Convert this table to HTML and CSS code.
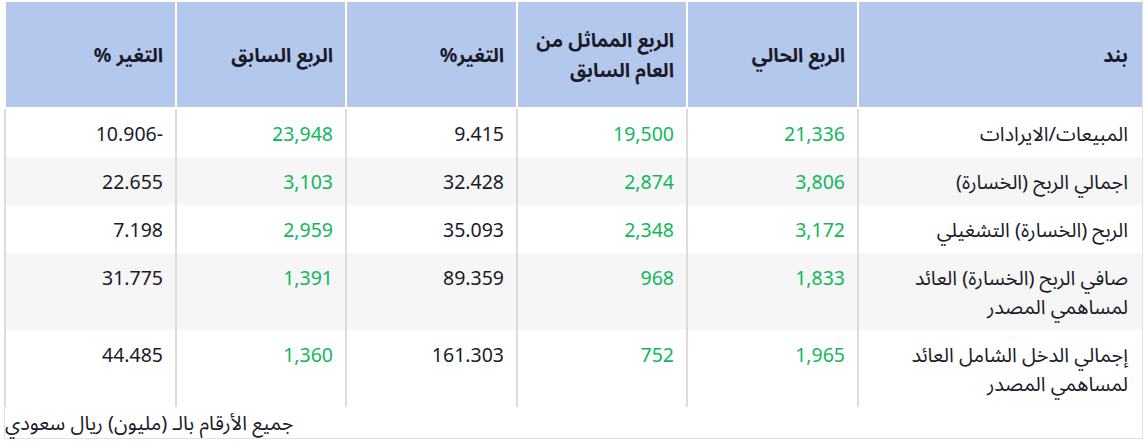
FILE: index.html
```html
<!DOCTYPE html>
<html lang="ar">
<head>
<meta charset="utf-8">
<title>نتائج الربع</title>
<link rel="stylesheet" href="styles.css">
</head>
<body>
<div class="panel" dir="rtl">
  <table class="fin">
    <colgroup>
      <col class="c-item">
      <col class="c-a">
      <col class="c-b">
      <col class="c-a">
      <col class="c-b">
      <col class="c-a">
    </colgroup>
    <thead>
      <tr>
        <th>بند</th>
        <th>الربع الحالي</th>
        <th>الربع المماثل من العام السابق</th>
        <th>التغير%</th>
        <th>الربع السابق</th>
        <th>التغير %</th>
      </tr>
    </thead>
    <tbody>
      <tr>
        <td>المبيعات/الايرادات</td>
        <td class="pos">21,336</td>
        <td class="pos">19,500</td>
        <td>9.415</td>
        <td class="pos">23,948</td>
        <td>-10.906</td>
      </tr>
      <tr class="alt">
        <td>اجمالي الربح (الخسارة)</td>
        <td class="pos">3,806</td>
        <td class="pos">2,874</td>
        <td>32.428</td>
        <td class="pos">3,103</td>
        <td>22.655</td>
      </tr>
      <tr>
        <td>الربح (الخسارة) التشغيلي</td>
        <td class="pos">3,172</td>
        <td class="pos">2,348</td>
        <td>35.093</td>
        <td class="pos">2,959</td>
        <td>7.198</td>
      </tr>
      <tr class="alt">
        <td>صافي الربح (الخسارة) العائد لمساهمي المصدر</td>
        <td class="pos">1,833</td>
        <td class="pos">968</td>
        <td>89.359</td>
        <td class="pos">1,391</td>
        <td>31.775</td>
      </tr>
      <tr>
        <td>إجمالي الدخل الشامل العائد لمساهمي المصدر</td>
        <td class="pos">1,965</td>
        <td class="pos">752</td>
        <td>161.303</td>
        <td class="pos">1,360</td>
        <td>44.485</td>
      </tr>
    </tbody>
  </table>
  <p class="note">جميع الأرقام بالـ (مليون) ريال سعودي</p>
</div>
</body>
</html>
```

FILE: styles.css
```css
html, body {
  margin: 0;
  padding: 0;
  background: #ffffff;
}

body {
  font-family: "Noto Sans", "Noto Sans Arabic", "DejaVu Sans", sans-serif;
  color: #1b1b29;
}

.panel {
  box-sizing: border-box;
  width: 1139px;
  margin-left: 4px;
  border: 1px solid #e1e1e1;
  border-top: none;
}

.fin {
  width: 1137px;
  border-collapse: collapse;
  table-layout: fixed;
}

.c-item { width: 284px; }
.c-a { width: 171px; }
.c-b { width: 170px; }

.fin th,
.fin td {
  text-align: right;
  font-size: 19.5px;
  line-height: 29px;
  padding: 0 12px 0 8px;
}

.fin th {
  background: #b4c7ec;
  font-weight: 700;
  height: 105px;
  vertical-align: middle;
  border-left: 2px solid #ffffff;
  border-top: 2px solid #ffffff;
  border-bottom: 2px solid #ffffff;
  line-height: 30px;
}

.fin td {
  vertical-align: top;
  font-weight: 400;
  padding-top: 10px;
  padding-bottom: 9px;
  border-left: 2px solid #dcdcdc;
}

.fin th:first-child,
.fin td:first-child {
  padding-right: 14px;
}

.fin td:first-child {
  font-size: 20px;
}

.fin tr.alt td {
  background: #f6f6f6;
}

.fin td.pos {
  color: #12b75c;
}

.note {
  margin: 0;
  text-align: left;
  font-size: 20px;
  line-height: 31px;
  padding-left: 0;
}
```
